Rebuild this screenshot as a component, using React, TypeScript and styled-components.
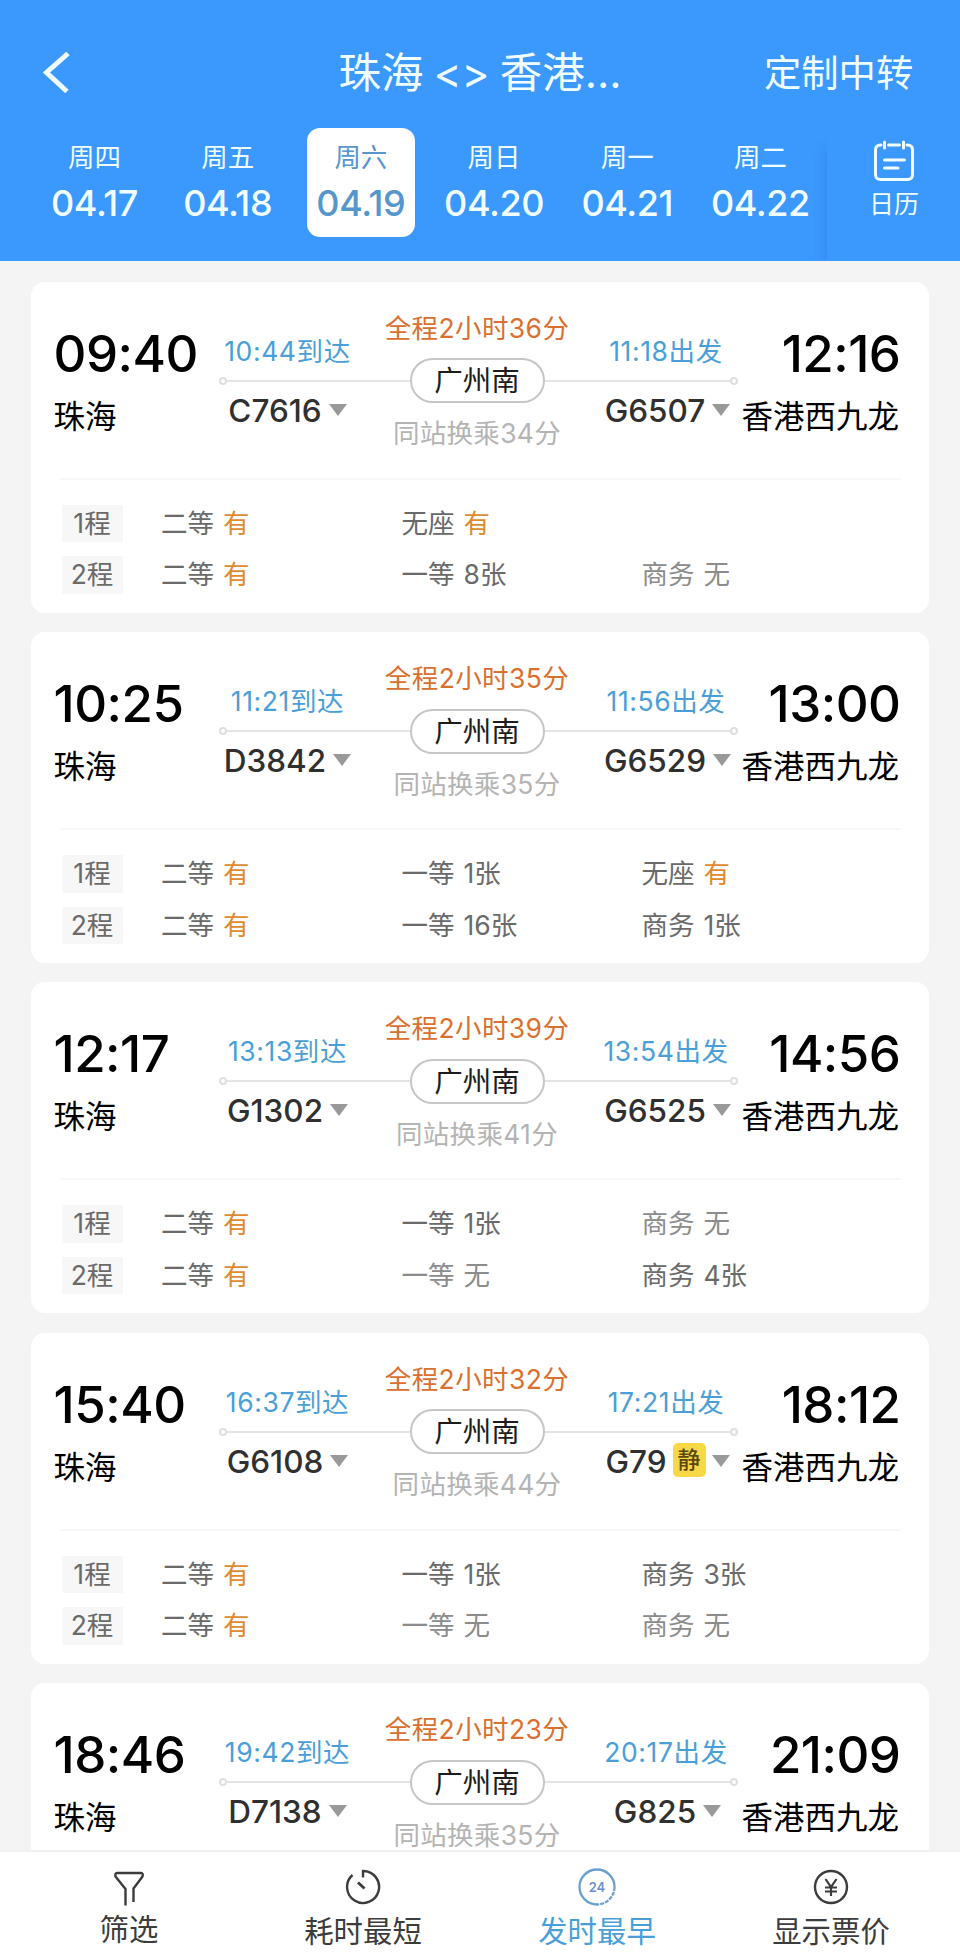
import React from "react";
import styled, { createGlobalStyle } from "styled-components";

const GlobalStyle = createGlobalStyle`
  * { box-sizing: border-box; }
  body {
    margin: 0;
    background: #f4f4f4;
    font-family: "Inter", "Noto Sans CJK SC", sans-serif;
    color: #000;
  }
`;

const Page = styled.div`
  display: flex;
  flex-direction: column;
  width: 960px;
  height: 1958px;
  overflow: hidden;
`;

/* ---------- Header ---------- */

const Header = styled.header`
  flex: none;
  height: 260.5px;
  background: #3b98fc;
  color: #f0feff;
`;

const TitleBar = styled.div`
  display: grid;
  grid-template-columns: 196px 1fr 196px;
  align-items: center;
  height: 128px;
  padding: 18px 0 0;
`;

const BackButton = styled.button`
  display: flex;
  margin-left: 41px;
  padding: 0;
  border: 0;
  background: none;
  color: inherit;
`;

const Title = styled.h1`
  margin: 0;
  text-align: center;
  font-size: 42.5px;
  font-weight: 400;
  line-height: 50px;
  word-spacing: -2px;
  white-space: pre;
`;

const HeaderAction = styled.span`
  padding-top: 1px;
  font-size: 37.3px;
  line-height: 50px;
  white-space: nowrap;
`;

const DateBar = styled.div`
  display: flex;
  height: 132.5px;
`;

const DateTabs = styled.div`
  display: flex;
  gap: 25.2px;
  padding-left: 40.5px;
  width: 827px;
`;

const DateTab = styled.div<{ $active?: boolean }>`
  display: flex;
  flex-direction: column;
  align-items: center;
  flex: none;
  width: 108px;
  height: 108.5px;
  padding-top: 12px;
  border-radius: 13px;
  background: ${(p) => (p.$active ? "#fff" : "transparent")};
  color: ${(p) => (p.$active ? "#5596cc" : "inherit")};
`;

const Weekday = styled.span`
  font-size: 26.5px;
  line-height: 34px;
`;

const DayNumber = styled.span`
  margin-top: 8px;
  font-size: 36px;
  font-weight: 500;
  line-height: 42px;
  letter-spacing: -0.4px;
`;

const CalendarButton = styled.div`
  display: flex;
  flex-direction: column;
  align-items: center;
  flex: 1;
  margin-top: 10px;
  padding: 2px 0 0 1px;
  box-shadow: -4px 8px 12px -4px rgba(20, 90, 190, 0.28);
  clip-path: inset(0 0 0 -20px);
`;

const CalendarLabel = styled.span`
  margin-top: 5px;
  font-size: 25px;
  line-height: 34px;
`;

/* ---------- Trip list ---------- */

const List = styled.main`
  flex: 1;
  min-height: 0;
  display: flex;
  flex-direction: column;
  gap: 19.4px;
  padding: 21.2px 31px 0;
  overflow: hidden;
`;

const Card = styled.section`
  flex: none;
  height: 331px;
  border-radius: 14px;
  background: #fff;
`;

const Summary = styled.div`
  display: flex;
  justify-content: space-between;
  height: 196px;
  padding: 0 30px 0 22.5px;
`;

const Terminal = styled.div<{ $end?: boolean }>`
  display: flex;
  flex-direction: column;
  flex: none;
  align-items: ${(p) => (p.$end ? "flex-end" : "flex-start")};
  width: ${(p) => (p.$end ? 161.5 : 165)}px;
  padding-top: 42px;
  white-space: nowrap;
`;

const Clock = styled.span<{ $end?: boolean }>`
  margin-right: ${(p) => (p.$end ? -1.5 : 0)}px;
  font-size: 51px;
  font-weight: 500;
  line-height: 60px;
  letter-spacing: -0.5px;
`;

const City = styled.span`
  margin-top: 15px;
  font-size: 31.5px;
  line-height: 36px;
`;

const Leg = styled.div<{ $width: number }>`
  display: flex;
  flex-direction: column;
  width: ${(p) => p.$width}px;
  padding-top: 52px;
  white-space: nowrap;
`;

const LegTime = styled.span<{ $end?: boolean }>`
  height: 34px;
  margin-right: ${(p) => (p.$end ? 3 : 0)}px;
  text-align: center;
  font-size: 26.5px;
  line-height: 34px;
  letter-spacing: 0.6px;
  color: #4a9fd8;
`;

const Track = styled.div<{ $end?: boolean }>`
  display: flex;
  flex-direction: ${(p) => (p.$end ? "row-reverse" : "row")};
  align-items: center;
  height: 8px;
  margin: 9px 0 8px;
`;

const TrackDot = styled.i`
  width: 8px;
  height: 8px;
  border: 2px solid #dfdfdf;
  border-radius: 50%;
`;

const TrackLine = styled.i`
  flex: 1;
  height: 2px;
  background: #e4e4e4;
`;

const TrainNumber = styled.div`
  display: flex;
  align-items: center;
  justify-content: center;
  height: 36px;
  font-size: 31.5px;
  font-weight: 500;
  line-height: 36px;
  color: #303030;
`;

const QuietBadge = styled.span`
  width: 33px;
  height: 34px;
  margin: -4px -1px 0 6px;
  border-radius: 5px;
  background: #f8d846;
  text-align: center;
  font-size: 23px;
  line-height: 34px;
  color: #5a4a12;
`;

const Caret = styled.i`
  margin: -2px 0 0 7px;
  border: 9px solid transparent;
  border-top: 12px solid #999;
  border-bottom: 0;
`;

const Transfer = styled.div`
  display: flex;
  flex-direction: column;
  width: 241px;
  padding-top: 29px;
  text-align: center;
  white-space: nowrap;
`;

const Duration = styled.span`
  font-size: 26.5px;
  line-height: 34px;
  letter-spacing: 0.4px;
  color: #d9702f;
`;

const StationRow = styled.div`
  display: flex;
  align-items: center;
  height: 45px;
  margin: 13.5px 0 16px;
`;

const Station = styled.span`
  width: 135px;
  height: 45px;
  border: 2px solid #c6c6c6;
  border-radius: 23px;
  font-size: 28.5px;
  line-height: 41px;
  color: #1c1c1c;
`;

const TransferNote = styled.span`
  height: 28px;
  font-size: 26.5px;
  line-height: 28px;
  letter-spacing: 0.3px;
  color: #b4b4b4;
`;

const Seats = styled.div`
  display: flex;
  flex-direction: column;
  gap: 14px;
  margin: 0 28px 0 29px;
  padding-top: 25px;
  border-top: 2px solid #f7f7f7;
`;

const SeatRow = styled.div`
  display: grid;
  grid-template-columns: 99.5px 240.5px 240px 1fr;
  height: 37.5px;
  padding-left: 1.5px;
  line-height: 37.5px;
  font-size: 26.5px;
  color: #6a6a6a;
`;

const LegBadge = styled.span`
  width: 61px;
  background: #f7f7f7;
  text-align: center;
`;

const Seat = styled.span<{ $none?: boolean }>`
  display: flex;
  gap: 9px;
  color: ${(p) => (p.$none ? "#8c8c8c" : "inherit")};
`;

const Stock = styled.span<{ $available?: boolean }>`
  color: ${(p) => (p.$available ? "#e08a30" : "inherit")};
`;

/* ---------- Bottom bar ---------- */

const BottomBar = styled.nav`
  display: flex;
  flex: none;
  height: 108.5px;
  padding: 0 12px;
  border-top: 2px solid #f0f0f0;
  background: #fff;
`;

const BottomItem = styled.div<{ $active?: boolean }>`
  display: flex;
  flex-direction: column;
  align-items: center;
  flex: 1;
  padding-top: 16px;
  color: ${(p) => (p.$active ? "#4a9fd8" : "#3c3c3c")};
`;

const BottomLabel = styled.span<{ $raised?: boolean }>`
  margin-top: ${(p) => (p.$raised ? 5 : 7)}px;
  font-size: 29.4px;
  line-height: 38px;
`;

/* ---------- Icons ---------- */

const BackIcon = () => (
  <svg width="30" height="42" viewBox="0 0 30 42" fill="none" stroke="currentColor" strokeWidth="5">
    <path d="M27 1.500 5.500 20.500 26 39.500" />
  </svg>
);

const CalendarIcon = () => (
  <svg width="42" height="42" viewBox="0 0 42 42" fill="none" stroke="currentColor" strokeWidth="3" strokeLinecap="round">
    <path d="M8 5H7.500Q2.500 5 2.500 10v24.500q0 5 5 5h27q5 0 5-5V10q0-5-5-5H34M15.500 5h11" />
    <path d="M11.500 2v6M30.500 2v6M11.500 20h20M11.500 28h13.500" />
  </svg>
);

const FilterIcon = () => (
  <svg width="38" height="38" viewBox="0 0 38 38" fill="none" stroke="currentColor" strokeWidth="2.4" strokeLinejoin="round">
    <path d="M15.500 37.500V21L5.500 8.500Q4.800 5 7 5h24q2.500 0 1.500 3.500L23.500 20.500V34" />
  </svg>
);

const TimerIcon = () => (
  <svg width="38" height="38" viewBox="0 0 38 38" fill="none" stroke="currentColor" strokeWidth="2.4">
    <path d="M19 9.500V3a16 16 0 1 1-10.500 4" />
    <path d="m14 14.500 6.500 6" strokeWidth="2.800" />
  </svg>
);

const EarliestIcon = () => (
  <svg width="38" height="38" viewBox="0 0 38 38" fill="none" stroke="currentColor">
    <g stroke="#6b9fd0" strokeWidth="2.300">
      <path d="M19 36.500A17.500 17.500 0 1 1 36.500 19" />
      <path d="M36.500 19A17.500 17.500 0 0 1 19 36.500" strokeDasharray="4 1" />
    </g>
    <text x="19" y="24" textAnchor="middle" fontSize="13" fontWeight="600" fill="#6b8fd0" stroke="none">
      24
    </text>
  </svg>
);

const PriceIcon = () => (
  <svg width="38" height="38" viewBox="0 0 38 38" fill="none" stroke="currentColor" strokeWidth="2.400">
    <circle cx="19" cy="19" r="16" />
    <path d="m13.500 11 5.500 8 5.500-8M19 19v9M13 19.500h12M13 23.500h12" strokeWidth="2.200" />
  </svg>
);

/* ---------- Data ---------- */

type SeatInfo = [name: string, stock: string];

interface Trip {
  depart: string;
  arrive: string;
  total: string;
  wait: string;
  legArrive: string;
  legDepart: string;
  first: string;
  second: string;
  quiet?: boolean;
  seats: SeatInfo[][];
}

const DAYS = [
  ["周四", "04.17"],
  ["周五", "04.18"],
  ["周六", "04.19"],
  ["周日", "04.20"],
  ["周一", "04.21"],
  ["周二", "04.22"],
];

const TRIPS: Trip[] = [
  {
    depart: "09:40", arrive: "12:16", total: "2小时36分", wait: "34分",
    legArrive: "10:44", legDepart: "11:18", first: "C7616", second: "G6507",
    seats: [
      [["二等", "有"], ["无座", "有"]],
      [["二等", "有"], ["一等", "8张"], ["商务", "无"]],
    ],
  },
  {
    depart: "10:25", arrive: "13:00", total: "2小时35分", wait: "35分",
    legArrive: "11:21", legDepart: "11:56", first: "D3842", second: "G6529",
    seats: [
      [["二等", "有"], ["一等", "1张"], ["无座", "有"]],
      [["二等", "有"], ["一等", "16张"], ["商务", "1张"]],
    ],
  },
  {
    depart: "12:17", arrive: "14:56", total: "2小时39分", wait: "41分",
    legArrive: "13:13", legDepart: "13:54", first: "G1302", second: "G6525",
    seats: [
      [["二等", "有"], ["一等", "1张"], ["商务", "无"]],
      [["二等", "有"], ["一等", "无"], ["商务", "4张"]],
    ],
  },
  {
    depart: "15:40", arrive: "18:12", total: "2小时32分", wait: "44分",
    legArrive: "16:37", legDepart: "17:21", first: "G6108", second: "G79", quiet: true,
    seats: [
      [["二等", "有"], ["一等", "1张"], ["商务", "3张"]],
      [["二等", "有"], ["一等", "无"], ["商务", "无"]],
    ],
  },
  {
    depart: "18:46", arrive: "21:09", total: "2小时23分", wait: "35分",
    legArrive: "19:42", legDepart: "20:17", first: "D7138", second: "G825",
    seats: [],
  },
];

const TripCard = ({ trip }: { trip: Trip }) => (
  <Card>
    <Summary>
      <Terminal>
        <Clock>{trip.depart}</Clock>
        <City>珠海</City>
      </Terminal>
      <Leg $width={138}>
        <LegTime>{trip.legArrive}到达</LegTime>
        <Track>
          <TrackDot />
          <TrackLine />
        </Track>
        <TrainNumber>
          {trip.first}
          <Caret />
        </TrainNumber>
      </Leg>
      <Transfer>
        <Duration>全程{trip.total}</Duration>
        <StationRow>
          <TrackLine />
          <Station>广州南</Station>
          <TrackLine />
        </StationRow>
        <TransferNote>同站换乘{trip.wait}</TransferNote>
      </Transfer>
      <Leg $width={140}>
        <LegTime $end>{trip.legDepart}出发</LegTime>
        <Track $end>
          <TrackDot />
          <TrackLine />
        </Track>
        <TrainNumber>
          {trip.second}
          {trip.quiet && <QuietBadge>静</QuietBadge>}
          <Caret />
        </TrainNumber>
      </Leg>
      <Terminal $end>
        <Clock $end>{trip.arrive}</Clock>
        <City>香港西九龙</City>
      </Terminal>
    </Summary>
    {trip.seats.length > 0 && (
      <Seats>
        {trip.seats.map((row, i) => (
          <SeatRow key={i}>
            <LegBadge>{i + 1}程</LegBadge>
            {row.map(([name, stock]) => (
              <Seat key={name} $none={stock === "无"}>
                <span>{name}</span>
                <Stock $available={stock === "有"}>{stock}</Stock>
              </Seat>
            ))}
          </SeatRow>
        ))}
      </Seats>
    )}
  </Card>
);

export default function App() {
  return (
    <Page>
      <GlobalStyle />
      <Header>
        <TitleBar>
          <BackButton aria-label="返回">
            <BackIcon />
          </BackButton>
          <Title>{"珠海 <> 香港..."}</Title>
          <HeaderAction>定制中转</HeaderAction>
        </TitleBar>
        <DateBar>
          <DateTabs>
            {DAYS.map(([weekday, date]) => (
              <DateTab key={date} $active={date === "04.19"}>
                <Weekday>{weekday}</Weekday>
                <DayNumber>{date}</DayNumber>
              </DateTab>
            ))}
          </DateTabs>
          <CalendarButton>
            <CalendarIcon />
            <CalendarLabel>日历</CalendarLabel>
          </CalendarButton>
        </DateBar>
      </Header>
      <List>
        {TRIPS.map((trip) => (
          <TripCard key={trip.depart} trip={trip} />
        ))}
      </List>
      <BottomBar>
        <BottomItem>
          <FilterIcon />
          <BottomLabel $raised>筛选</BottomLabel>
        </BottomItem>
        <BottomItem>
          <TimerIcon />
          <BottomLabel>耗时最短</BottomLabel>
        </BottomItem>
        <BottomItem $active>
          <EarliestIcon />
          <BottomLabel>发时最早</BottomLabel>
        </BottomItem>
        <BottomItem>
          <PriceIcon />
          <BottomLabel>显示票价</BottomLabel>
        </BottomItem>
      </BottomBar>
    </Page>
  );
}
